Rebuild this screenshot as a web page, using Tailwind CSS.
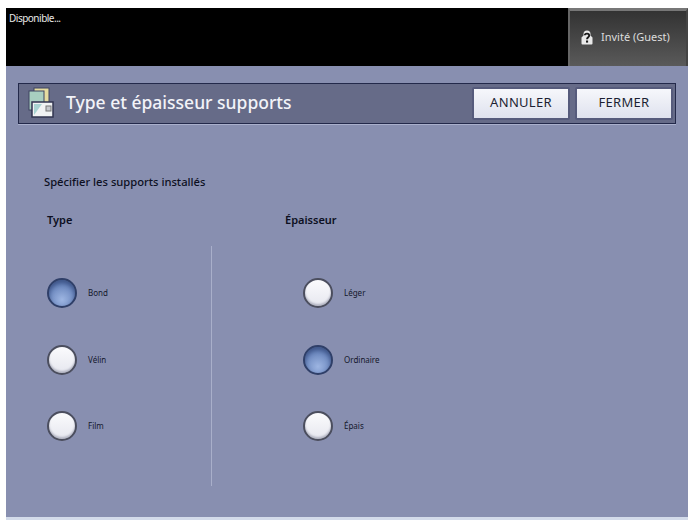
<!DOCTYPE html>
<html lang="fr">
<head>
<meta charset="utf-8">
<script src="https://cdn.jsdelivr.net/npm/@tailwindcss/browser@4"></script>
</head>
<body class="bg-white">
<div class="w-[692px] h-[520px] overflow-hidden pt-[8px] pl-[6px] pr-[4px] font-['Noto_Sans','Open_Sans',sans-serif] bg-white">
  <div class="flex flex-col h-[512px] bg-[#888fb0]">
    <header class="h-[58px] shrink-0 bg-black flex justify-between">
      <p class="text-[10px] leading-[14px] text-[#e8e8e8] pl-[3px] pt-[3px] tracking-[-0.5px]">Disponible...</p>
      <div class="w-[120px] border-t-[3px] border-l-[2px] border-r-[2px] border-t-[#777] border-l-[#666] border-r-[#444] bg-gradient-to-b from-[#333] to-[#5a5a5a] flex items-center gap-[7px] pl-[10px] pb-[3px]">
        <svg width="14" height="15" viewBox="0 0 14 15" class="shrink-0">
          <path d="M3.500 5.500V4a3.500 3.500 0 0 1 7 0v1.500L12.500 7.500V13.500a1 1 0 0 1-1 1H2.500a1 1 0 0 1-1-1V7.500Z" fill="#e8e8e8"/>
          <path d="M4.800 5.300C4.800 3 9.200 3 9.200 5.500C9.200 7.300 7 7 7 9.300" fill="none" stroke="#1a1a1a" stroke-width="1.900"/>
          <rect x="6" y="10.500" width="2.100" height="2.100" fill="#1a1a1a"/>
        </svg>
        <span class="text-[11px] text-[#dcdcdc] whitespace-nowrap">Invité (Guest)</span>
      </div>
    </header>

    <main class="flex-1 min-h-0 flex flex-col pt-[17px] pl-[12px] pr-[12px]">
      <div class="h-[41px] shrink-0 border border-[#23294a] bg-[#666b88] flex items-center pl-[6px] pr-[2px] pb-[1px] shadow-[0_1px_0_#aab0cc]">
        <svg width="30" height="34" viewBox="0 0 30 34" class="shrink-0">
          <rect x="9" y="2" width="15" height="20" fill="#e5dca0" stroke="#3f4460"/>
          <rect x="4" y="5" width="15" height="19" fill="#a8cfc0" stroke="#3f4460"/>
          <rect x="7" y="16" width="21" height="15" fill="#f1f3f4" stroke="#30344f" stroke-width="1.500"/>
          <path d="M9 29 L17 18 H9Z" fill="#a9d4d2"/>
          <rect x="21" y="20" width="5" height="5" fill="#c6c9ce" stroke="#777"/>
        </svg>
        <h1 class="ml-[11px] text-[17.500px] font-medium text-[#f2f3f8] whitespace-nowrap leading-none">Type et épaisseur supports</h1>
        <div class="ml-auto flex gap-[5px]">
          <button class="w-[98px] h-[33px] rounded-[2px] bg-gradient-to-b from-[#f6f7fb] to-[#dfe2ee] border-2 border-[#565b7c] text-[13px] text-[#1c1f33] tracking-[0.3px]">ANNULER</button>
          <button class="w-[98px] h-[33px] rounded-[2px] bg-gradient-to-b from-[#f6f7fb] to-[#dfe2ee] border-2 border-[#565b7c] text-[13px] text-[#1c1f33] tracking-[0.3px]">FERMER</button>
        </div>
      </div>

      <p class="mt-[50px] ml-[26px] text-[11.200px] leading-[16px] font-medium text-[#0d0f22] whitespace-nowrap">Spécifier les supports installés</p>

      <div class="mt-[22px] flex">
        <section class="w-[193px] shrink-0 pl-[29px]">
          <h2 class="text-[11px] leading-[16px] font-semibold text-[#0d0f22]">Type</h2>
        </section>
        <section class="pl-[74px]">
          <h2 class="text-[11px] leading-[16px] font-semibold text-[#0d0f22]">Épaisseur</h2>
        </section>
      </div>

      <div class="mt-[18px] flex h-[240px]">
        <div class="w-[194px] shrink-0 border-r border-[#a9afca] flex flex-col gap-[36.500px] pt-[32px] pl-[29px]">
          <label class="flex items-center gap-[11px] h-[30px]">
            <span class="w-[30px] h-[30px] rounded-full border-2 border-[#2f3f68] bg-[radial-gradient(circle_at_50%_75%,#9db5e2,#5f7cb4_75%)] shadow-[inset_0_3px_4px_#3f5588]"></span>
            <span class="text-[8px] text-[#14172c]">Bond</span>
          </label>
          <label class="flex items-center gap-[11px] h-[30px]">
            <span class="w-[30px] h-[30px] rounded-full border-2 border-[#4b4e5e] bg-gradient-to-b from-[#fbfbfd] to-[#e6e7ef] shadow-[inset_0_-2px_2px_#b4b6c4]"></span>
            <span class="text-[8px] text-[#14172c]">Vélin</span>
          </label>
          <label class="flex items-center gap-[11px] h-[30px]">
            <span class="w-[30px] h-[30px] rounded-full border-2 border-[#4b4e5e] bg-gradient-to-b from-[#fbfbfd] to-[#e6e7ef] shadow-[inset_0_-2px_2px_#b4b6c4]"></span>
            <span class="text-[8px] text-[#14172c]">Film</span>
          </label>
        </div>
        <div class="pl-[91px] flex flex-col gap-[36.500px] pt-[32px]">
          <label class="flex items-center gap-[11px] h-[30px]">
            <span class="w-[30px] h-[30px] rounded-full border-2 border-[#4b4e5e] bg-gradient-to-b from-[#fbfbfd] to-[#e6e7ef] shadow-[inset_0_-2px_2px_#b4b6c4]"></span>
            <span class="text-[8px] text-[#14172c]">Léger</span>
          </label>
          <label class="flex items-center gap-[11px] h-[30px]">
            <span class="w-[30px] h-[30px] rounded-full border-2 border-[#2f3f68] bg-[radial-gradient(circle_at_50%_75%,#9db5e2,#5f7cb4_75%)] shadow-[inset_0_3px_4px_#3f5588]"></span>
            <span class="text-[8px] text-[#14172c]">Ordinaire</span>
          </label>
          <label class="flex items-center gap-[11px] h-[30px]">
            <span class="w-[30px] h-[30px] rounded-full border-2 border-[#4b4e5e] bg-gradient-to-b from-[#fbfbfd] to-[#e6e7ef] shadow-[inset_0_-2px_2px_#b4b6c4]"></span>
            <span class="text-[8px] text-[#14172c]">Épais</span>
          </label>
        </div>
      </div>
    </main>
    <div class="h-[3px] shrink-0 bg-[#d3dbea]"></div>
  </div>
</div>
</body>
</html>
